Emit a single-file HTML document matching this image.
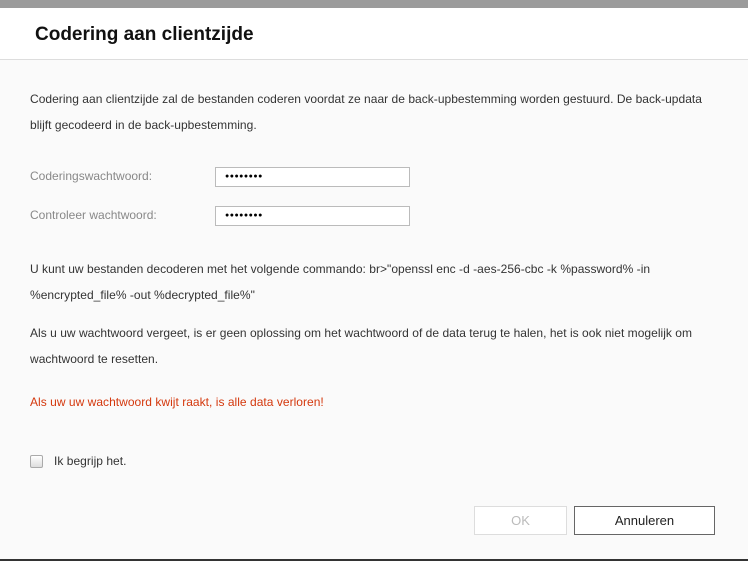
<!DOCTYPE html>
<html><head><style>
body{margin:0;width:748px;height:561px;overflow:hidden;background:#fafafa;font-family:"Liberation Sans",sans-serif;position:relative}
.top{position:absolute;left:0;top:0;width:748px;height:8px;background:#9b9b9b}
.hdr{position:absolute;left:0;top:8px;width:748px;height:51px;background:#fff;border-bottom:1px solid #ddd}
.hdr h1{margin:0;position:absolute;left:35px;top:16px;font-size:19px;font-weight:bold;color:#111}
.t{position:absolute;left:30px;font-size:12px;color:#333;line-height:26px;letter-spacing:0.03px;width:720px}
.lbl{position:absolute;left:30px;font-size:12px;color:#888}
.inp{position:absolute;left:215px;height:18px;border:1px solid #bbb;background:#fff;font-size:7px;line-height:18px;padding-left:9px;width:184px;color:#000;letter-spacing:0.5px}
.red{color:#d4380d}
.cb{position:absolute;left:30px;top:455px;width:11px;height:11px;border:1px solid #aaa;border-radius:2px;background:linear-gradient(#fff,#ddd)}
.btn{position:absolute;top:506px;height:29px;box-sizing:border-box;font-size:13px;text-align:center;line-height:28px;background:#fff}
.bot{position:absolute;left:0;top:559px;width:748px;height:2px;background:#333}
</style></head><body>
<div class="top"></div>
<div class="hdr"><h1>Codering aan clientzijde</h1></div>
<div class="t" style="top:86px">Codering aan clientzijde zal de bestanden coderen voordat ze naar de back-upbestemming worden gestuurd. De back-updata<br>blijft gecodeerd in de back-upbestemming.</div>
<div class="lbl" style="top:169px">Coderingswachtwoord:</div>
<div class="inp" style="top:167px">●●●●●●●●</div>
<div class="lbl" style="top:208px">Controleer wachtwoord:</div>
<div class="inp" style="top:206px">●●●●●●●●</div>
<div class="t" style="top:256px">U kunt uw bestanden decoderen met het volgende commando: br&gt;"openssl enc -d -aes-256-cbc -k %password% -in<br>%encrypted_file% -out %decrypted_file%"</div>
<div class="t" style="top:320px">Als u uw wachtwoord vergeet, is er geen oplossing om het wachtwoord of de data terug te halen, het is ook niet mogelijk om<br>wachtwoord te resetten.</div>
<div class="t red" style="top:389px">Als uw uw wachtwoord kwijt raakt, is alle data verloren!</div>
<div class="cb"></div>
<div class="t" style="top:448px;left:54px">Ik begrijp het.</div>
<div class="btn" style="left:474px;width:93px;border:1px solid #ddd;color:#bbb">OK</div>
<div class="btn" style="left:574px;width:141px;border:1px solid #666;color:#222">Annuleren</div>
<div class="bot"></div>
</body></html>
